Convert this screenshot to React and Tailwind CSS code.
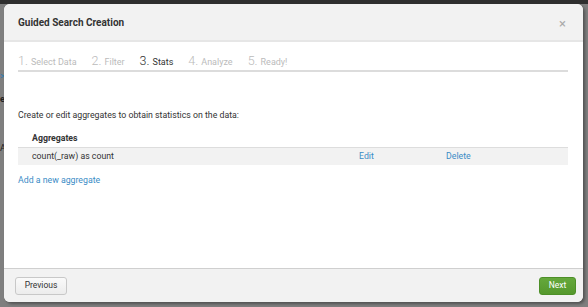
import React from 'react';

const steps = [
  { n: '1.', label: 'Select Data' },
  { n: '2.', label: 'Filter' },
  { n: '3.', label: 'Stats', active: true },
  { n: '4.', label: 'Analyze' },
  { n: '5.', label: 'Ready!' },
];

const App = () => {
  return (
    <div className="w-[588px] h-[307px] overflow-hidden bg-[#7f7f7f] border-t-4 border-[#2f2f2f] font-['Roboto',sans-serif] flex">
      {/* page behind the overlay */}
      <div className="w-[4px] overflow-hidden text-[9px] leading-none">
        <div className="mt-[68px] text-[#2b7bb0]">&gt;</div>
        <div className="mt-[14px] text-[#222] font-bold">e</div>
        <div className="mt-[40px] text-[#222]">A</div>
      </div>

      {/* modal */}
      <div className="w-[579px] h-[298px] flex flex-col bg-white rounded-[6px] overflow-hidden shadow-[2px_2px_3px_rgba(0,0,0,0.35)]">
        <div className="h-[38px] shrink-0 bg-[#f2f2f2] border-b-[2px] border-[#e6e6e6] flex items-center justify-between pl-[14px] pr-[17px]">
          <h3 className="text-[10px] font-bold text-[#333]">Guided Search Creation</h3>
          <span className="text-[#aaa] text-[13px] leading-none mt-[2px]">×</span>
        </div>

        <div className="flex-1 px-[14px] pt-[12px]">
          <div className="flex items-baseline gap-[15px] border-b-2 border-[#dcdcdc] mr-[1px] pb-[1px] leading-[14px]">
            {steps.map((s) => (
              <div
                key={s.n}
                className={s.active ? 'flex items-baseline text-[#333]' : 'flex items-baseline text-[#bbb]'}
              >
                <span className="text-[12.5px] font-light">{s.n}</span>
                <span className="ml-[3px] text-[9px]">{s.label}</span>
              </div>
            ))}
          </div>

          <p className="mt-[37px] text-[8.75px] leading-[12px] text-[#333]">Create or edit aggregates to obtain statistics on the data:</p>

          <div className="mt-[9px] mr-[1px] text-[8.75px] text-[#333]">
            <div className="grid grid-cols-[327px_87px_1fr] h-[17px] items-center">
              <div className="pl-[14px] font-bold">Aggregates</div>
              <div></div>
              <div></div>
            </div>
            <div className="grid grid-cols-[327px_87px_1fr] h-[18px] items-center bg-[#f2f2f2] border-t border-[#dddddd]">
              <div className="pl-[14px]">count(_raw) as count</div>
              <div className="pl-[14px] text-[#3a8cc6]">Edit</div>
              <div className="pl-[14px] text-[#3a8cc6]">Delete</div>
            </div>
          </div>

          <a className="block mt-[9px] text-[8.75px] leading-[12px] text-[#3a8cc6]" href="#">
            Add a new aggregate
          </a>
        </div>

        <div className="h-[34px] shrink-0 bg-[#f2f2f2] border-t border-[#cfcfcf] flex items-center justify-between pl-[11px] pr-[7px]">
          <button className="h-[18px] w-[52px] rounded-[3px] border border-[#c8c8c8] bg-gradient-to-b from-[#fafafa] to-[#ececec] text-[8.5px] text-[#333]">
            Previous
          </button>
          <button className="h-[18px] w-[37px] rounded-[3px] border border-[#4d8f28] bg-gradient-to-b from-[#65a83c] to-[#55982d] text-[8.5px] text-white">
            Next
          </button>
        </div>
      </div>
    </div>
  );
};

export default App;
